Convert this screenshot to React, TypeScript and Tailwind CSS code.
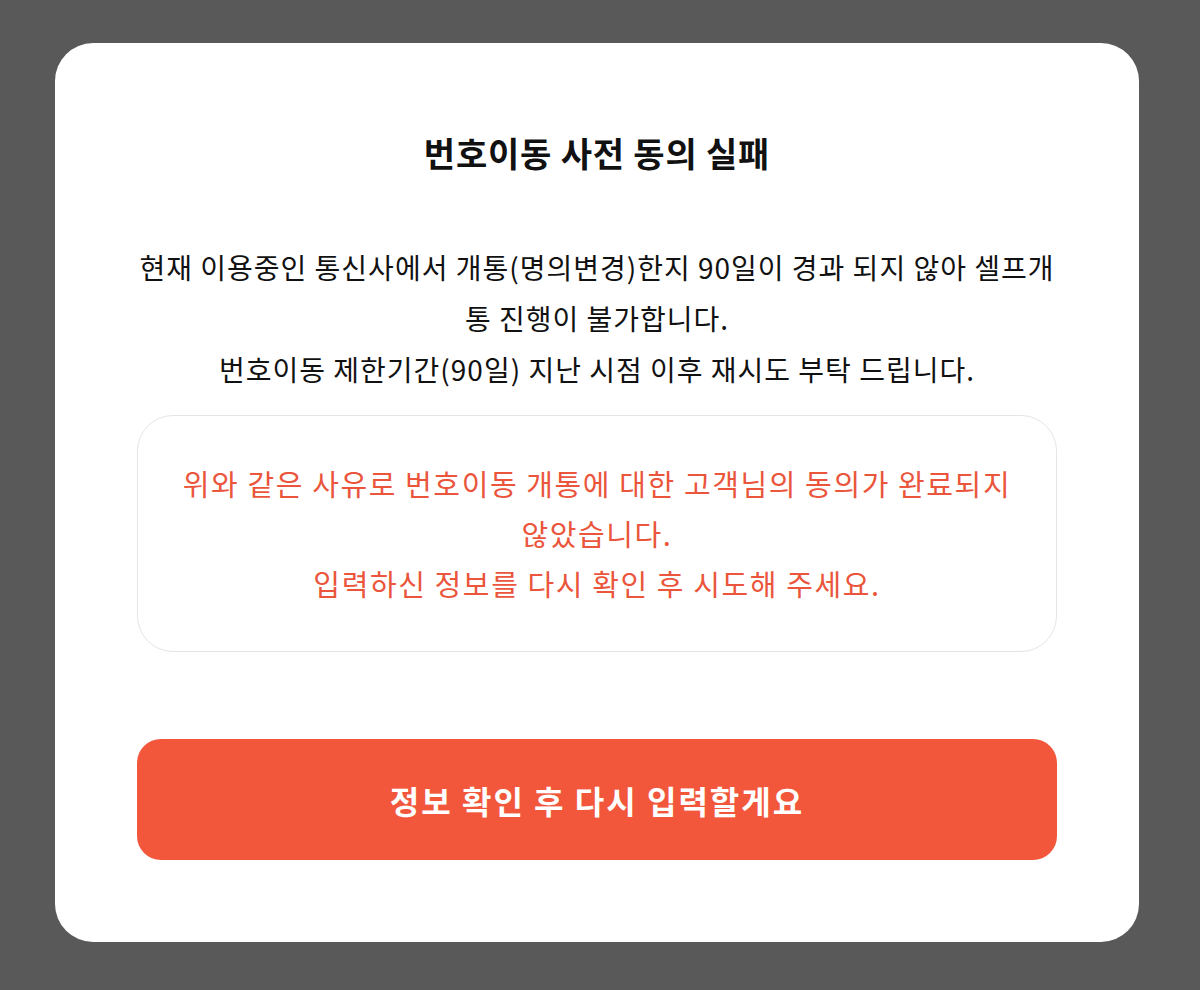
export default function App() {
  return (
    <div
      className="flex min-h-[990px] w-full items-start bg-[#595959] pl-[55px] pt-[43px]"
      style={{ fontFamily: '"Noto Sans CJK KR", "Noto Sans", sans-serif' }}
    >
      <div className="flex w-[1084px] flex-col items-center rounded-[38px] bg-white px-[82px] pb-[82px] pt-[92px]">
        <h1 className="text-[34px] font-bold leading-[36px] tracking-[0.8px] text-[#111111]">번호이동 사전 동의 실패</h1>

        <p className="mt-[71px] text-center text-[28px] leading-[51px] tracking-[1px] text-[#111111]">
          현재 이용중인 통신사에서 개통(명의변경)한지 90일이 경과 되지 않아 셀프개
          <br />
          통 진행이 불가합니다.
          <br />
          번호이동 제한기간(90일) 지난 시점 이후 재시도 부탁 드립니다.
        </p>

        <div className="mt-[20px] w-full rounded-[36px] border border-[#e5e5e5] px-4 pb-[43px] pt-[42px]">
          <p className="text-center text-[29px] leading-[50px] tracking-[1.6px] text-[#ea553b]">
            위와 같은 사유로 번호이동 개통에 대한 고객님의 동의가 완료되지
            <br />
            않았습니다.
            <br />
            입력하신 정보를 다시 확인 후 시도해 주세요.
          </p>
        </div>

        <button
          type="button"
          className="mt-[87px] h-[121px] w-full rounded-[24px] bg-[#f2573c] text-[32px] font-bold tracking-[2px] text-white"
        >
          정보 확인 후 다시 입력할게요
        </button>
      </div>
    </div>
  );
}
